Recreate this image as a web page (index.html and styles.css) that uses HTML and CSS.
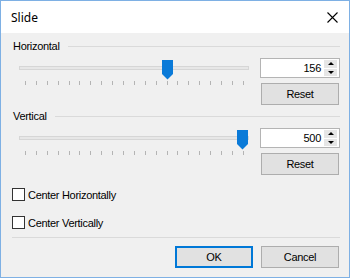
FILE: index.html
```html
<!DOCTYPE html>
<html lang="en">
<head>
    <meta charset="UTF-8">
    <title>Slide</title>
    <link rel="stylesheet" href="styles.css">
</head>
<body>
    <div class="window">
        <div class="titlebar">
            <span class="title">Slide</span>
            <svg class="close" width="11" height="11" viewBox="0 0 11 11">
                <path d="M0.5 0.5 L10.5 10.5 M10.5 0.5 L0.5 10.5" stroke="#000" stroke-width="1.1" fill="none"/>
            </svg>
        </div>

        <div class="content">
            <!-- Horizontal group -->
            <div class="group">
                <div class="group-head"><span>Horizontal</span><div class="rule"></div></div>
                <div class="group-row">
                    <div class="slider">
                        <div class="track"></div>
                        <svg class="thumb" style="left: 151px" width="11" height="20" viewBox="0 0 11 20">
                            <polygon points="0,0 11,0 11,14 5.5,19.5 0,14" fill="#0a7ad8"/>
                        </svg>
                        <div class="ticks">
                            <i></i><i></i><i></i><i></i><i></i><i></i><i></i><i></i><i></i><i></i><i></i>
                            <i></i><i></i><i></i><i></i><i></i><i></i><i></i><i></i><i></i><i></i>
                        </div>
                    </div>
                    <div class="controls">
                        <div class="updown">
                            <span class="value">156</span>
                            <div class="spin">
                                <div class="spin-btn"><b class="up"></b></div>
                                <div class="spin-btn"><b class="down"></b></div>
                            </div>
                        </div>
                        <button class="btn reset">Reset</button>
                    </div>
                </div>
            </div>

            <!-- Vertical group -->
            <div class="group">
                <div class="group-head"><span>Vertical</span><div class="rule"></div></div>
                <div class="group-row">
                    <div class="slider">
                        <div class="track"></div>
                        <svg class="thumb" style="left: 226px" width="11" height="20" viewBox="0 0 11 20">
                            <polygon points="0,0 11,0 11,14 5.5,19.5 0,14" fill="#0a7ad8"/>
                        </svg>
                        <div class="ticks">
                            <i></i><i></i><i></i><i></i><i></i><i></i><i></i><i></i><i></i><i></i><i></i>
                            <i></i><i></i><i></i><i></i><i></i><i></i><i></i><i></i><i></i><i></i>
                        </div>
                    </div>
                    <div class="controls">
                        <div class="updown">
                            <span class="value">500</span>
                            <div class="spin">
                                <div class="spin-btn"><b class="up"></b></div>
                                <div class="spin-btn"><b class="down"></b></div>
                            </div>
                        </div>
                        <button class="btn reset">Reset</button>
                    </div>
                </div>
            </div>

            <label class="check first"><span class="box"></span>Center Horizontally</label>
            <label class="check"><span class="box"></span>Center Vertically</label>

            <div class="separator"></div>

            <div class="footer">
                <button class="btn default">OK</button>
                <button class="btn">Cancel</button>
            </div>
        </div>
    </div>
</body>
</html>
```

FILE: styles.css
```css
* {
    margin: 0;
    padding: 0;
    box-sizing: border-box;
}

body {
    font-family: 'Liberation Sans', Arial, sans-serif;
    font-size: 11px;
    color: #000;
    background: #f0f0f0;
}

.window {
    width: 350px;
    height: 278px;
    border: 1px solid #7eb0e4;
    background: #f0f0f0;
    display: flex;
    flex-direction: column;
}

.titlebar {
    height: 32px;
    background: #fff;
    display: flex;
    align-items: center;
    justify-content: space-between;
    padding: 0 11px 0 10px;
}

.title {
    font-family: 'Noto Sans', 'Open Sans', sans-serif;
    font-size: 12px;
}

.close {
    display: block;
}

.content {
    flex: 1;
    padding: 7px 9px 0 10px;
    letter-spacing: -0.3px;
}

.group + .group {
    margin-top: 5px;
}

.group-head {
    height: 13px;
    line-height: 13px;
    display: flex;
    align-items: center;
    gap: 8px;
    padding-left: 2px;
}

.group-head .rule {
    flex: 1;
    height: 1px;
    background: #dadada;
}

.group-row {
    display: grid;
    grid-template-columns: 1fr 80px;
}

/* Track bar */
.slider {
    position: relative;
    padding-top: 13px;
}

.track {
    margin-left: 8px;
    width: 230px;
    height: 4px;
    border: 1px solid #d6d6d6;
    background: #e7e7e7;
}

.thumb {
    position: absolute;
    top: 7px;
}

.ticks {
    margin: 11px 0 0 14px;
    width: 219px;
    height: 4px;
    display: flex;
    justify-content: space-between;
}

.ticks i {
    width: 1px;
    height: 4px;
    background: #b4b4b4;
}

.controls {
    padding-top: 5px;
    display: flex;
    flex-direction: column;
    gap: 5px;
}

.updown {
    height: 20px;
    border: 1px solid #b4b4b4;
    background: #fff;
    display: flex;
    align-items: center;
    padding: 1px;
}

.updown .value {
    flex: 1;
    text-align: right;
    padding-right: 3px;
}

.spin {
    width: 13px;
    height: 16px;
    display: flex;
    flex-direction: column;
    gap: 1px;
    margin-right: 1px;
}

.spin-btn {
    flex: 1;
    background: #e6e6e6;
    display: flex;
    align-items: center;
    justify-content: center;
}

.spin-btn b {
    width: 0;
    height: 0;
    border-left: 3px solid transparent;
    border-right: 3px solid transparent;
}

.spin-btn .up {
    border-bottom: 3px solid #000;
}

.spin-btn .down {
    border-top: 3px solid #000;
}

.btn {
    font-family: 'Liberation Sans', Arial, sans-serif;
    font-size: 11px;
    letter-spacing: -0.3px;
    color: #000;
    width: 78px;
    height: 22px;
    background: #e1e1e1;
    border: 1px solid #adadad;
}

.reset {
    margin-left: 1px;
}

.btn.default {
    border-color: #0078d7;
    box-shadow: inset 0 0 0 1px #0078d7;
}

.check {
    display: flex;
    align-items: center;
    height: 13px;
    margin-top: 15px;
}

.check.first {
    margin-top: 13px;
}

.check .box {
    width: 13px;
    height: 13px;
    border: 1px solid #333;
    background: #fff;
    margin: 0 3px 0 1px;
}

.separator {
    margin-top: 8px;
    height: 1px;
    background: #dadada;
    margin-left: 1px;
}

.footer {
    margin-top: 8px;
    display: flex;
    justify-content: flex-end;
    gap: 8px;
    padding-right: 1px;
}
```
